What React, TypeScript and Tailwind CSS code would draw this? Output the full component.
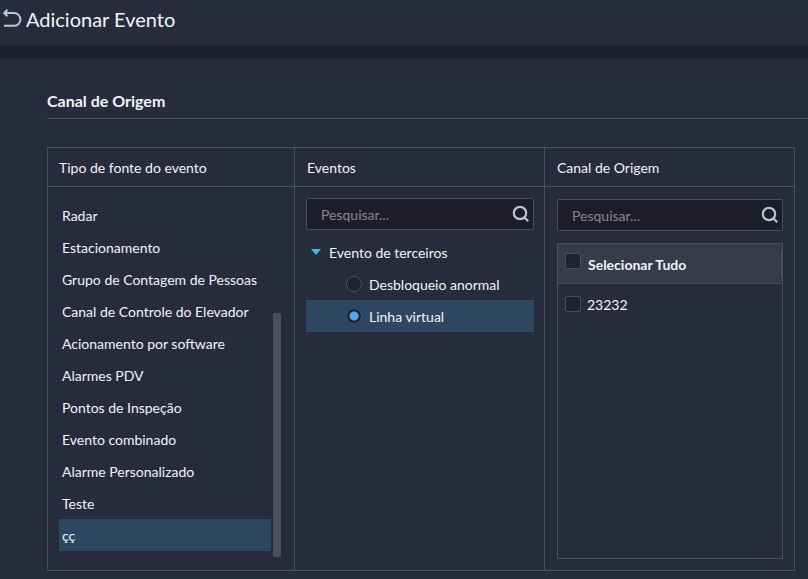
import React, { useState } from 'react';

// ── Data ───────────────────────────────────────────────────────────

const SOURCE_TYPES = [
  'Radar',
  'Estacionamento',
  'Grupo de Contagem de Pessoas',
  'Canal de Controle do Elevador',
  'Acionamento por software',
  'Alarmes PDV',
  'Pontos de Inspeção',
  'Evento combinado',
  'Alarme Personalizado',
  'Teste',
  'çç',
];

const EVENTS = ['Desbloqueio anormal', 'Linha virtual'];

const CHANNELS = ['23232'];

// ── Icons ──────────────────────────────────────────────────────────

function BackIcon() {
  return (
    <svg width="20" height="20" viewBox="0 0 20 20" fill="none" stroke="#bcc3d4" strokeWidth="2" aria-hidden="true">
      <path d="M2 4h10a6.4 6.4 0 0 1 0 12.8H2" />
      <path d="M5.4 0.8L2.2 4l3.2 3.2" />
    </svg>
  );
}

function SearchIcon() {
  return (
    <svg width="18" height="18" viewBox="0 0 18 18" fill="none" stroke="#bcc3d4" strokeWidth="2.2" aria-hidden="true">
      <circle cx="8" cy="8" r="6.2" />
      <path d="M12 12l4.2 4.2" />
    </svg>
  );
}

// ── Sub-components ─────────────────────────────────────────────────

function SearchBox({ label }: { label: string }) {
  return (
    <div className="flex h-8 items-center rounded-xs border border-[#4a4e5f] bg-[#1c1d29] pr-[3px] pl-3.5">
      <input
        type="text"
        aria-label={label}
        placeholder="Pesquisar..."
        className="h-full min-w-0 flex-1 bg-transparent outline-none placeholder:text-[#85878d]"
      />
      <button type="button" aria-label={`Buscar ${label}`} className="shrink-0">
        <SearchIcon />
      </button>
    </div>
  );
}

function Column({ title, className, children }: { title: string; className: string; children: React.ReactNode }) {
  return (
    <section className="group flex min-w-0 flex-col border-r border-[#4a4e5f]">
      <h3 className="h-[39px] border-b border-[#4a4e5f] px-3 pt-2.5 leading-5 group-first:pl-[11px]">{title}</h3>
      <div className={`flex-1 ${className}`}>{children}</div>
    </section>
  );
}

function Checkbox({ checked, onChange }: { checked: boolean; onChange: () => void }) {
  return (
    <input
      type="checkbox"
      checked={checked}
      onChange={onChange}
      className="size-4 shrink-0 appearance-none rounded-xs border border-[#4a4e5f] bg-[#20222d] checked:bg-[#46a9f8]"
    />
  );
}

// ── Main component ─────────────────────────────────────────────────

export default function App() {
  const [sourceType, setSourceType] = useState('çç');
  const [open, setOpen] = useState(true);
  const [event, setEvent] = useState('Linha virtual');
  const [channels, setChannels] = useState<string[]>([]);

  const allSelected = channels.length === CHANNELS.length;

  const toggleChannel = (name: string) =>
    setChannels(prev => (prev.includes(name) ? prev.filter(c => c !== name) : [...prev, name]));

  return (
    <div className="min-h-screen bg-[#272c3c] font-['Lato',sans-serif] text-sm text-[#f2f3f5]">
      {/* ── Page header ───────────────────────────────────── */}
      <header className="flex h-[59px] items-start gap-1 border-b-14 border-[#1f222d] pt-[5px] pl-0.5">
        <button type="button" aria-label="Voltar" className="pt-1">
          <BackIcon />
        </button>
        <h1 className="text-xl leading-7">Adicionar Evento</h1>
      </header>

      <main className="pt-8 pl-[47px]">
        <h2 className="h-7 border-b border-[#4a4e5f] text-base leading-5 font-bold">Canal de Origem</h2>

        <div className="mt-7 mr-[13px] grid min-h-[424px] grid-cols-[247fr_250fr_250fr] border-y border-l border-[#4a4e5f]">
          {/* ── Source type ───────────────────────────────── */}
          <Column title="Tipo de fonte do evento" className="flex gap-0.5 pt-3 pr-[13px] pb-[13px] pl-[11px]">
            <ul className="min-w-0 flex-1">
              {SOURCE_TYPES.map(type => (
                <li key={type}>
                  <button
                    type="button"
                    onClick={() => setSourceType(type)}
                    className={`block h-8 w-full pt-0.5 pl-[3px] text-left ${type === sourceType ? 'bg-[#2e4760]' : ''}`}
                  >
                    {type}
                  </button>
                </li>
              ))}
            </ul>
            <div className="h-[244px] w-2 self-end rounded-xs bg-[#4a4e5f]" />
          </Column>

          {/* ── Events ────────────────────────────────────── */}
          <Column title="Eventos" className="pt-[11px] pr-2.5 pl-[11px]">
            <SearchBox label="Eventos" />
            <button
              type="button"
              onClick={() => setOpen(!open)}
              aria-expanded={open}
              className="mt-1.5 flex h-8 w-full items-center gap-2 pl-[5px]"
            >
              <svg width="10" height="6" viewBox="0 0 10 6" fill="#3db8fb" aria-hidden="true">
                <path d="M0 0h10L5 6z" />
              </svg>
              <span className="pt-0.5">Evento de terceiros</span>
            </button>
            {open && EVENTS.map(name => (
              <label
                key={name}
                className={`flex h-8 items-center gap-[7px] pl-10 ${name === event ? 'bg-[#2e4760]' : ''}`}
              >
                <input
                  type="radio"
                  name="event"
                  checked={name === event}
                  onChange={() => setEvent(name)}
                  className="size-4 shrink-0 appearance-none rounded-full border border-[#4a4e5f] bg-[#20222d] checked:bg-[radial-gradient(circle,#46a9f8_4px,#20222d_5px)]"
                />
                <span className="pt-0.5">{name}</span>
              </label>
            ))}
          </Column>

          {/* ── Channels ──────────────────────────────────── */}
          <Column title="Canal de Origem" className="flex flex-col gap-3 pt-3 pr-[11px] pb-[11px] pl-3">
            <SearchBox label="Canal de Origem" />
            <div className="flex-1 border border-[#4a4e5f]">
              <div className="flex h-10 items-center border-b border-[#4a4e5f] bg-[#373b4a]">
                <label className="flex flex-1 items-start gap-[7px] pl-[7px] font-bold">
                  <Checkbox checked={allSelected} onChange={() => setChannels(allSelected ? [] : CHANNELS)} />
                  <span className="pt-0.5">Selecionar Tudo</span>
                </label>
                <div className="h-6 w-px bg-[#4a4e5f]" />
              </div>
              {CHANNELS.map(name => (
                <label key={name} className="flex h-10 items-center gap-1.5 pl-[7px]">
                  <Checkbox checked={channels.includes(name)} onChange={() => toggleChannel(name)} />
                  <span className="pt-0.5">{name}</span>
                </label>
              ))}
            </div>
          </Column>
        </div>
      </main>
    </div>
  );
}
